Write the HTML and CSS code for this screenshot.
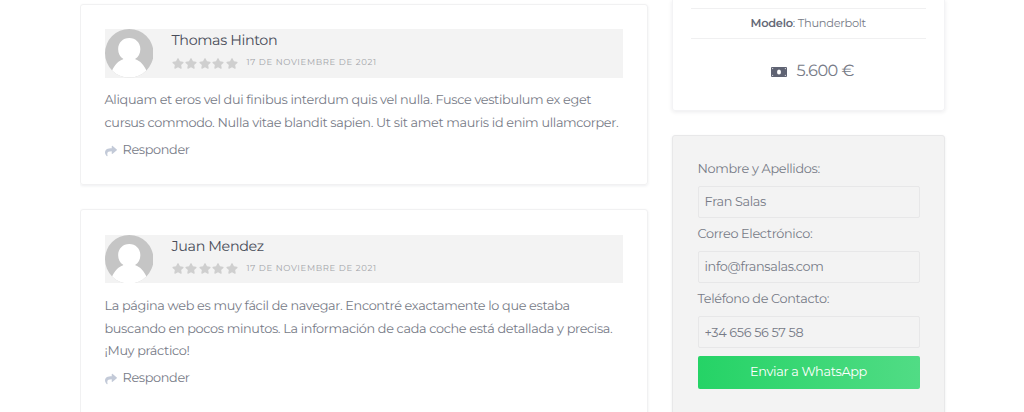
FILE: index.html
```html
<!DOCTYPE html>
<html lang="es">
<head>
    <meta charset="UTF-8">
    <meta name="viewport" content="width=device-width, initial-scale=1.0">
    <title>Thunderbolt - Opiniones</title>
    <link rel="stylesheet" href="styles.css">
</head>
<body>
    <svg class="symbols" width="0" height="0">
        <symbol id="avatar" viewBox="0 0 48 48">
            <circle cx="24" cy="24" r="24" fill="#c5c5c5"/>
            <path fill="#fff" d="M24 9c6.300 0 11 4.800 11 11 0 4.300-2 7.800-5 9.500v.5C35 31.500 38.500 36 41 41A24 24 0 0 1 7 41c2.500-5 6-9.500 11-11v-.5c-3-1.700-5-5.200-5-9.500C13 13.800 17.700 9 24 9z"/>
        </symbol>
        <symbol id="star" viewBox="0 0 576 512">
            <path d="M259 18 194 150 48 171c-26 4-37 36-18 55l106 103-25 145c-5 26 23 46 46 34l131-69 131 69c23 12 51-8 46-34l-25-145 106-103c19-19 8-51-18-55l-146-21-65-132c-12-24-46-24-58 0z"/>
        </symbol>
        <symbol id="share" viewBox="0 0 512 512">
            <path d="M503 191 327 39c-15-13-39-2-39 18v80C127 139 0 171 0 322c0 61 39 122 83 153 13 10 33-2 28-19C66 311 133 273 288 271v88c0 20 24 31 39 18l176-152c11-9 11-25 0-34z"/>
        </symbol>
    </svg>

    <div class="container">
        <div class="comments">
            <div class="comment">
                <div class="comment-header">
                    <svg class="avatar"><use href="#avatar"/></svg>
                    <div class="comment-details">
                        <div class="comment-author">Thomas Hinton</div>
                        <div class="comment-meta">
                            <div class="rating">
                                <svg><use href="#star"/></svg>
                                <svg><use href="#star"/></svg>
                                <svg><use href="#star"/></svg>
                                <svg><use href="#star"/></svg>
                                <svg><use href="#star"/></svg>
                            </div>
                            <time class="comment-date">17 de noviembre de 2021</time>
                        </div>
                    </div>
                </div>
                <p class="comment-text">Aliquam et eros vel dui finibus interdum quis vel nulla. Fusce vestibulum ex eget<br>cursus commodo. Nulla vitae blandit sapien. Ut sit amet mauris id enim ullamcorper.</p>
                <a class="reply"><svg><use href="#share"/></svg><span>Responder</span></a>
            </div>

            <div class="comment">
                <div class="comment-header">
                    <svg class="avatar"><use href="#avatar"/></svg>
                    <div class="comment-details">
                        <div class="comment-author">Juan Mendez</div>
                        <div class="comment-meta">
                            <div class="rating">
                                <svg><use href="#star"/></svg>
                                <svg><use href="#star"/></svg>
                                <svg><use href="#star"/></svg>
                                <svg><use href="#star"/></svg>
                                <svg><use href="#star"/></svg>
                            </div>
                            <time class="comment-date">17 de noviembre de 2021</time>
                        </div>
                    </div>
                </div>
                <p class="comment-text">La página web es muy fácil de navegar. Encontré exactamente lo que estaba<br>buscando en pocos minutos. La información de cada coche está detallada y precisa.<br>¡Muy práctico!</p>
                <a class="reply"><svg><use href="#share"/></svg><span>Responder</span></a>
            </div>
        </div>

        <div class="sidebar">
            <div class="vehicle">
                <div class="attribute"><strong>Modelo</strong>: Thunderbolt</div>
                <div class="price">
                    <svg viewBox="0 0 16 10">
                        <rect width="16" height="10" rx="1" fill="#5f6373"/>
                        <ellipse cx="8" cy="5" rx="2" ry="2.500" fill="#fff"/>
                        <path fill="#d5d6dc" d="M1 1h1.600L1 2.600zM15 1v1.600L13.400 1zM1 9V7.400L2.600 9zM15 9h-1.600L15 7.400z"/>
                    </svg>
                    <span>5.600 €</span>
                </div>
            </div>

            <form class="contact">
                <label for="nombre">Nombre y Apellidos:</label>
                <input type="text" id="nombre" value="Fran Salas">
                <label for="correo">Correo Electrónico:</label>
                <input type="text" id="correo" value="info@fransalas.com">
                <label for="telefono">Teléfono de Contacto:</label>
                <input type="text" id="telefono" value="+34 656 56 57 58">
                <button type="button">Enviar a WhatsApp</button>
            </form>
        </div>
    </div>
</body>
</html>
```

FILE: styles.css
```css
* { box-sizing: border-box; }
body { margin: 0; background: #fff; color: #777b87; font-family: Montserrat, Inter, sans-serif; font-size: 12.8px; line-height: 22.75px; letter-spacing: -.33px; text-rendering: geometricPrecision; }
.symbols { display: block; height: 0; }
.container { display: flex; gap: 24px; width: 865px; height: 412px; margin-left: 79.5px; overflow: hidden; padding-right: 4px; box-sizing: content-box; }

.comments { width: 568.5px; padding-top: 3.5px; }
.comment { margin-bottom: 24px; padding: 24.5px 24px 24px; border: 1px solid #f1f1f2; border-radius: 3px; box-shadow: 0 1px 3px rgba(30, 35, 60, .08); }
.comment:first-child { height: 181.5px; }
.comment-header { display: flex; height: 48.5px; background: #f3f3f3; }
.avatar { width: 48.5px; height: 48.5px; margin-right: 18.5px; }
.comment-details { padding-top: 1px; }
.comment-author { height: 21px; font-size: 14.3px; line-height: 20.5px; letter-spacing: -.36px; color: #484c58; }
.comment-meta { display: flex; align-items: center; height: 24px; }
.rating { display: flex; gap: 1.5px; margin-right: 9px; }
.rating svg { width: 12px; height: 11px; fill: #cfcfcf; }
.comment-date { margin-top: 1px; font-size: 8.5px; letter-spacing: .66px; text-transform: uppercase; color: #a2a3a8; }
.comment-text { margin: 12.8px 0 4px; white-space: nowrap; }
.reply { display: flex; align-items: center; height: 22.75px; }
.reply svg { width: 12px; height: 12px; margin-right: 6px; fill: #c3cad8; }

.sidebar { width: 272.5px; }
.vehicle { height: 110.5px; padding: 8px 18px 0; border: 1px solid #f3f3f5; border-top: 0; border-radius: 0 0 3px 3px; box-shadow: 0 1px 4px rgba(30, 35, 60, .09); }
.attribute { height: 31px; border-top: 1px solid #f0f0f1; border-bottom: 1px solid #f0f0f1; font-size: 11.4px; line-height: 28px; letter-spacing: -.26px; text-align: center; }
.attribute strong { font-weight: 600; color: #656977; }
.price { display: flex; align-items: center; justify-content: center; gap: 10px; margin-top: 20.5px; padding-left: 8px; font-size: 16.2px; line-height: 24px; letter-spacing: -.5px; }
.price svg { width: 16px; height: 10px; margin-top: 2px; }
.price span { margin-top: -1px; }

.contact { height: 340px; margin-top: 24.5px; padding: 22px 24px 0 24.5px; background: #f3f3f3; border: 1px solid #e8e8e9; border-radius: 3px; box-shadow: 0 1px 3px rgba(30, 35, 60, .08); }
.contact label { display: block; height: 22.75px; margin-bottom: 4.75px; padding-top: .8px; }
.contact input { display: block; width: 222px; height: 32px; margin: 0 0 5.8px; padding: 0 6px; color: inherit; background: transparent; border: 1px solid #e7e7e8; border-radius: 2px; font: inherit; letter-spacing: inherit; }
.contact button { display: block; width: 222px; height: 33px; margin-top: 7.5px; padding: 1px 0 0; color: #fff; background: linear-gradient(90deg, #25d366, #51dc85); border: 0; border-radius: 2px; font: inherit; letter-spacing: inherit; }
```
